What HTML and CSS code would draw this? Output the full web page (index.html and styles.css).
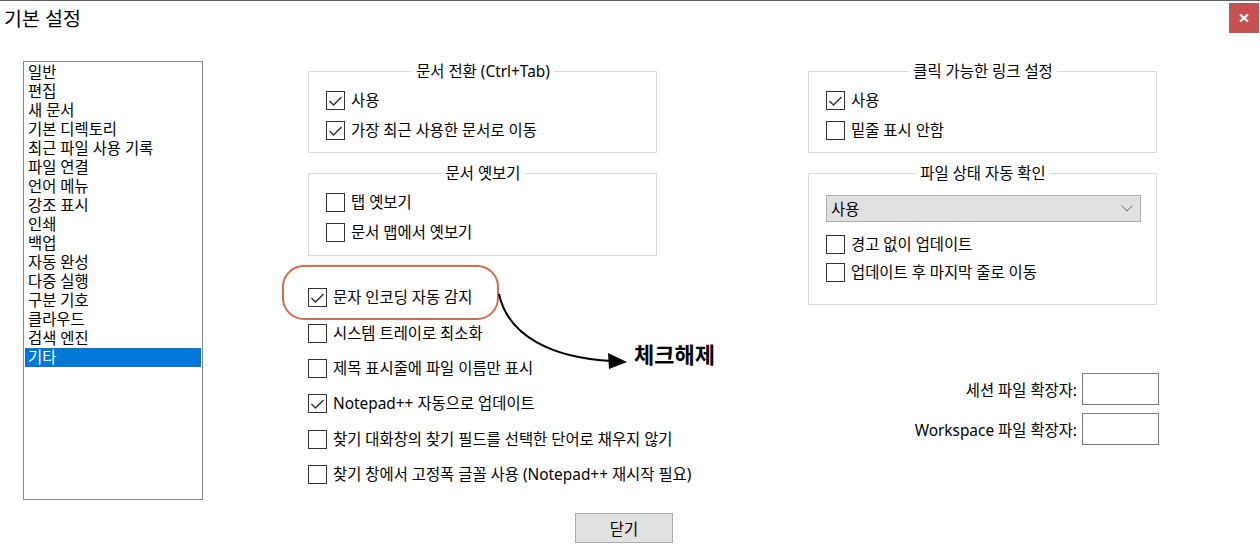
FILE: index.html
```html
<!DOCTYPE html>
<html lang="ko">
<head>
<meta charset="utf-8">
<title>기본 설정</title>
<link rel="stylesheet" href="styles.css">
</head>
<body>
<div class="window">
  <div class="titlebar">
    <div class="title">기본 설정</div>
    <div class="close"><svg width="10" height="8" viewBox="0 0 10 8"><path d="M1 0.5 L9 7.5 M9 0.5 L1 7.5" stroke="#fff" stroke-width="2.2"/></svg></div>
  </div>
  <div class="main">
    <ul class="list">
      <li>일반</li>
      <li>편집</li>
      <li>새 문서</li>
      <li>기본 디렉토리</li>
      <li>최근 파일 사용 기록</li>
      <li>파일 연결</li>
      <li>언어 메뉴</li>
      <li>강조 표시</li>
      <li>인쇄</li>
      <li>백업</li>
      <li>자동 완성</li>
      <li>다중 실행</li>
      <li>구분 기호</li>
      <li>클라우드</li>
      <li>검색 엔진</li>
      <li class="sel">기타</li>
    </ul>
    <div class="col mid">
      <fieldset class="group">
        <legend>문서 전환 (Ctrl+Tab)</legend>
        <div class="row"><span class="cb"><svg width="17" height="17" viewBox="0 0 17 17"><path d="M2.5 9 L6.5 13 L14.5 5" fill="none" stroke="#333" stroke-width="1.5"/></svg></span><span class="lbl">사용</span></div>
        <div class="row"><span class="cb"><svg width="17" height="17" viewBox="0 0 17 17"><path d="M2.5 9 L6.5 13 L14.5 5" fill="none" stroke="#333" stroke-width="1.5"/></svg></span><span class="lbl">가장 최근 사용한 문서로 이동</span></div>
      </fieldset>
      <fieldset class="group g2">
        <legend>문서 옛보기</legend>
        <div class="row"><span class="cb"></span><span class="lbl">탭 옛보기</span></div>
        <div class="row"><span class="cb"></span><span class="lbl">문서 맵에서 옛보기</span></div>
      </fieldset>
      <div class="opts">
        <div class="row"><span class="cb"><svg width="17" height="17" viewBox="0 0 17 17"><path d="M2.5 9 L6.5 13 L14.5 5" fill="none" stroke="#333" stroke-width="1.5"/></svg></span><span class="lbl">문자 인코딩 자동 감지</span></div>
        <div class="row"><span class="cb"></span><span class="lbl">시스템 트레이로 최소화</span></div>
        <div class="row"><span class="cb"></span><span class="lbl">제목 표시줄에 파일 이름만 표시</span></div>
        <div class="row"><span class="cb"><svg width="17" height="17" viewBox="0 0 17 17"><path d="M2.5 9 L6.5 13 L14.5 5" fill="none" stroke="#333" stroke-width="1.5"/></svg></span><span class="lbl">Notepad++ 자동으로 업데이트</span></div>
        <div class="row"><span class="cb"></span><span class="lbl">찾기 대화창의 찾기 필드를 선택한 단어로 채우지 않기</span></div>
        <div class="row"><span class="cb"></span><span class="lbl">찾기 창에서 고정폭 글꼴 사용 (Notepad++ 재시작 필요)</span></div>
      </div>
    </div>
    <div class="col right">
      <fieldset class="group">
        <legend>클릭 가능한 링크 설정</legend>
        <div class="row"><span class="cb"><svg width="17" height="17" viewBox="0 0 17 17"><path d="M2.5 9 L6.5 13 L14.5 5" fill="none" stroke="#333" stroke-width="1.5"/></svg></span><span class="lbl">사용</span></div>
        <div class="row"><span class="cb"></span><span class="lbl">밑줄 표시 안함</span></div>
      </fieldset>
      <fieldset class="group g2 rg2">
        <legend>파일 상태 자동 확인</legend>
        <div class="combo"><span>사용</span><svg width="12" height="7" viewBox="0 0 12 7"><path d="M0.5 0.5 L6 6 L11.5 0.5" fill="none" stroke="#666" stroke-width="1"/></svg></div>
        <div class="row"><span class="cb"></span><span class="lbl">경고 없이 업데이트</span></div>
        <div class="row"><span class="cb"></span><span class="lbl">업데이트 후 마지막 줄로 이동</span></div>
      </fieldset>
      <div class="ext">
        <div class="ext-row"><span>세션 파일 확장자:</span><span class="field"></span></div>
        <div class="ext-row"><span>Workspace 파일 확장자:</span><span class="field"></span></div>
      </div>
    </div>
  </div>
  <div class="footer"><button class="btn" type="button">닫기</button></div>

  <div class="ring"></div>
  <svg class="arrow" width="1260" height="560" viewBox="0 0 1260 560">
    <path d="M499 294 C 508 336, 552 358, 612 361" fill="none" stroke="#000" stroke-width="2"/>
    <polygon points="608,353 627,362 609,369" fill="#000"/>
  </svg>
  <div class="note">체크해제</div>
</div>
</body>
</html>
```

FILE: styles.css
```css
* { box-sizing: border-box; }

body {
  margin: 0;
  background: #fff;
  font-family: "Noto Sans", "Noto Sans CJK KR", sans-serif;
  font-size: 15.4px;
  color: #000;
}

.window {
  position: relative;
  width: 1260px;
  height: 560px;
  border-top: 1px solid #606060;
  overflow: hidden;
  background: #fff;
}

.titlebar {
  display: flex;
  justify-content: space-between;
  align-items: flex-start;
  height: 34px;
}

.title {
  font-size: 19.5px;
  line-height: 24px;
  padding: 6px 0 0 4px;
}

.close {
  width: 30px;
  height: 30px;
  margin: 2px 1px 0 0;
  background: #c75050;
  display: flex;
  align-items: center;
  justify-content: center;
}

.close svg { display: block; }

.main {
  display: flex;
  align-items: flex-start;
  padding-top: 26px;
}

.list {
  list-style: none;
  margin: 0 0 0 23px;
  padding: 1px;
  width: 180px;
  height: 439px;
  border: 1px solid #828790;
  flex: none;
}

.list li {
  height: 19px;
  line-height: 19px;
  padding-left: 3px;
  white-space: nowrap;
}

.list li.sel {
  background: #0078d7;
  color: #fff;
}

.col {
  flex: none;
  margin-top: 1px;
}

.mid {
  width: 349px;
  margin-left: 105px;
}

.right {
  width: 351px;
  margin-left: 151px;
}

.group {
  margin: 0;
  width: 349px;
  min-width: 0;
  padding: 4px 16px 7px 17px;
  border: 1px solid #dcdcdc;
}

.group legend {
  margin: 0 auto;
  padding: 0 4px;
  line-height: 19px;
  white-space: nowrap;
}

.g2 {
  margin-top: 11px;
  padding-bottom: 8px;
}

.row {
  display: flex;
  align-items: center;
  height: 30px;
  white-space: nowrap;
}

.lbl { line-height: 19px; }

.cb {
  display: block;
  flex: none;
  width: 19px;
  height: 19px;
  border: 1px solid #333;
  background: #fff;
  margin-right: 6px;
}

.cb svg { display: block; }

.opts { margin-top: 24px; }

.opts .row { height: 35.4px; }

.rg2 {
  padding-top: 12px;
  padding-bottom: 18px;
}

.combo {
  width: 315px;
  height: 27px;
  background: #e1e1e1;
  border: 1px solid #adadad;
  display: flex;
  align-items: center;
  justify-content: space-between;
  padding: 0 7px 0 4px;
  margin-bottom: 8px;
}

.combo svg { display: block; }

.rg2 .row { height: 28px; }

.ext {
  margin-top: 68px;
  display: flex;
  flex-direction: column;
  align-items: flex-end;
  gap: 8px;
}

.ext-row {
  display: flex;
  align-items: center;
  gap: 5px;
  white-space: nowrap;
}

.field {
  display: block;
  width: 77px;
  height: 32px;
  border: 1px solid #7a7a7a;
  background: #fff;
}

.footer {
  display: flex;
  justify-content: center;
  padding-right: 12px;
  margin-top: 13px;
}

.btn {
  width: 98px;
  height: 30px;
  background: #e1e1e1;
  border: 1px solid #adadad;
  border-radius: 0;
  font: inherit;
  color: #000;
  padding: 0;
}

.ring {
  position: absolute;
  left: 282px;
  top: 264px;
  width: 217px;
  height: 55px;
  border: 2px solid #d4694b;
  border-radius: 22px;
}

.arrow {
  position: absolute;
  left: 0;
  top: -1px;
  pointer-events: none;
}

.note {
  position: absolute;
  left: 634px;
  top: 340px;
  font-size: 22px;
  font-weight: bold;
  line-height: 26px;
  white-space: nowrap;
}
```
